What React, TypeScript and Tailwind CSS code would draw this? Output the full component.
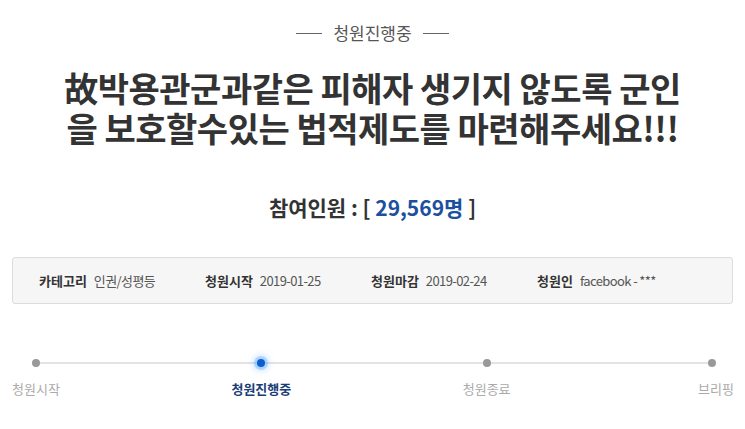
const INFO = [
  { label: "카테고리", value: "인권/성평등" },
  { label: "청원시작", value: "2019-01-25" },
  { label: "청원마감", value: "2019-02-24" },
  { label: "청원인", value: "facebook - ***" },
];

const STEPS = [
  { label: "청원시작", active: false },
  { label: "청원진행중", active: true },
  { label: "청원종료", active: false },
  { label: "브리핑", active: false },
];

export default function App() {
  return (
    <div
      className="w-[745px] h-[429px] bg-white overflow-hidden"
      style={{ fontFamily: '"Noto Sans CJK KR", "Noto Sans", sans-serif' }}
    >
      {/* status */}
      <div className="flex items-center justify-center gap-[11px] pt-[21px]">
        <span className="w-[26px] h-px bg-[#666]" />
        <span className="text-[17px] leading-[24px] text-[#555]">청원진행중</span>
        <span className="w-[26px] h-px bg-[#666]" />
      </div>

      {/* title */}
      <h1 className="mt-[23px] px-[30px] text-center text-[34px] leading-[40px] font-bold text-[#333] tracking-[-0.5px]">
        故박용관군과같은 피해자 생기지 않도록 군인
        <br />
        을 보호할수있는 법적제도를 마련해주세요!!!
      </h1>

      {/* count */}
      <div className="mt-[46px] text-center text-[21px] leading-[26px] font-bold text-[#333]">
        참여인원 : [ <span className="text-[#1d4f9f]">29,569명</span> ]
      </div>

      {/* info box */}
      <div className="mx-[12px] mt-[37px] h-[47px] rounded-[3px] border border-[#dcdcdc] bg-[#f6f6f6] flex items-center pl-[26px] text-[13px] text-[#333]">
        {INFO.map((it, i) => (
          <div
            key={it.label}
            className={`flex items-center gap-[7px] ${i < 3 ? "w-[166px]" : ""}`}
          >
            <span className="font-bold">{it.label}</span>
            <span className="text-[#555] tracking-[-0.6px]">{it.value}</span>
          </div>
        ))}
      </div>

      {/* progress */}
      <div className="relative ml-[36px] mr-[33px] mt-[58px]">
        <div className="h-[2px] bg-[#e3e3e3]" />
        <div className="absolute inset-x-0 -top-[3px] flex justify-between">
          {STEPS.map((s, i) => (
            <div key={s.label} className="relative w-0 flex justify-center">
              {s.active ? (
                <span className="shrink-0 w-[8px] h-[8px] rounded-full bg-[#0b5fcf] shadow-[0_0_0_3px_rgba(90,165,255,0.35),0_0_6px_4px_rgba(90,165,255,0.3)]" />
              ) : (
                <span className="shrink-0 w-[8px] h-[8px] rounded-full bg-[#999]" />
              )}
              <span
                className={`absolute top-[20px] whitespace-nowrap text-[13px] ${
                  s.active ? "font-bold text-[#1a3d77]" : "text-[#aaa]"
                } ${i === 3 ? "ml-[8px]" : ""}`}
              >
                {s.label}
              </span>
            </div>
          ))}
        </div>
      </div>
    </div>
  );
}
